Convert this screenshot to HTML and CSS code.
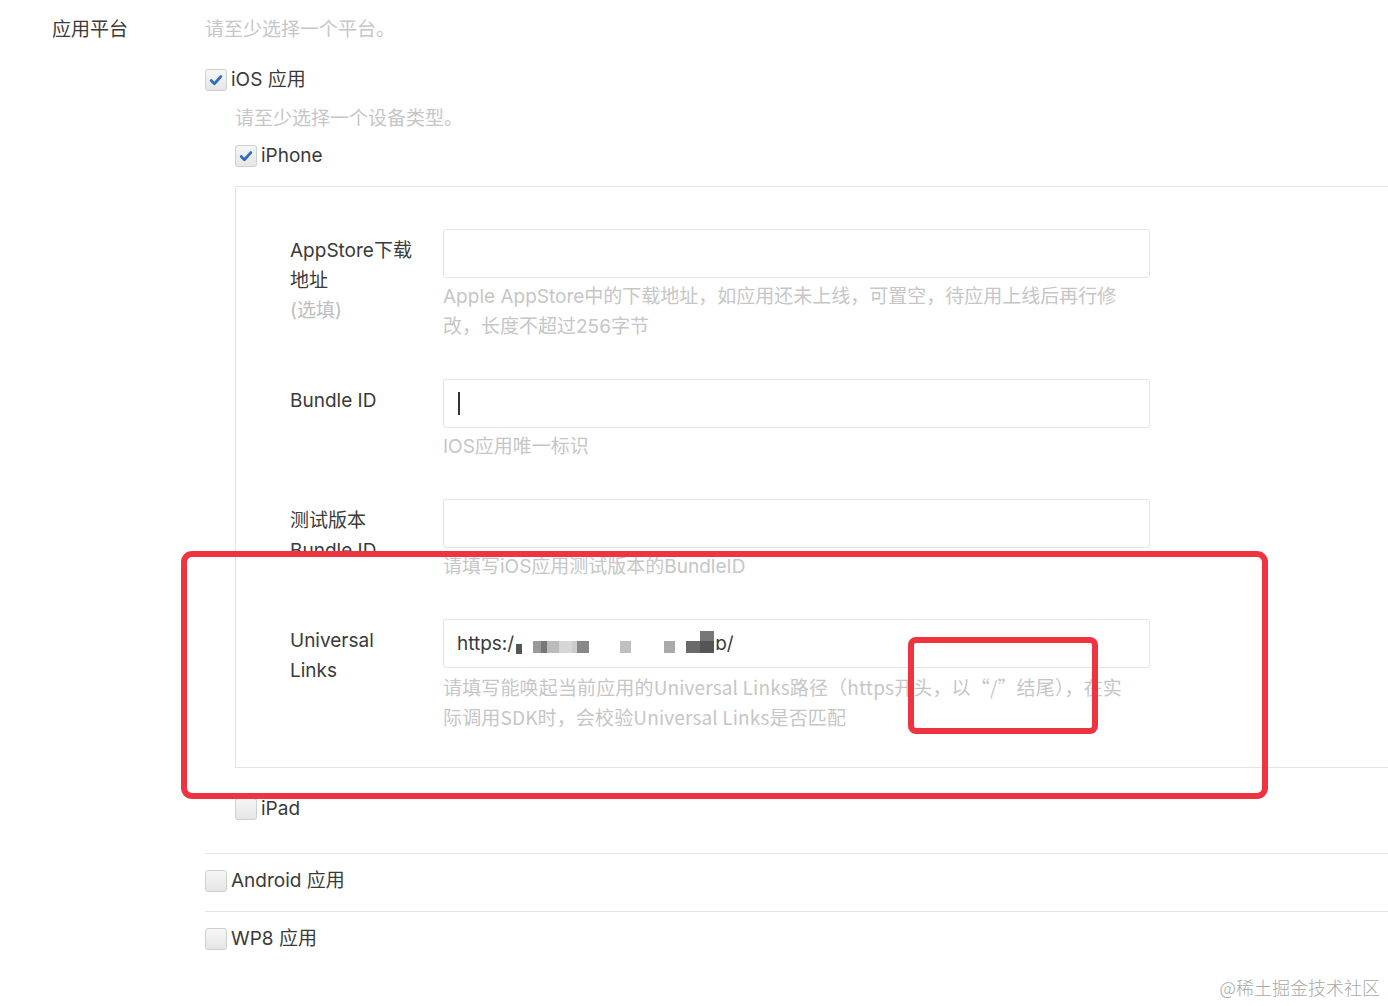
FILE: index.html
```html
<!DOCTYPE html>
<html lang="zh-CN">

<head>
    <meta charset="UTF-8">
    <meta name="viewport" content="width=device-width, initial-scale=1.0">
    <title>应用平台</title>
    <link rel="stylesheet" href="styles.css">
</head>

<body>

    <main class="page">

        <section class="field">

            <div class="field-label">应用平台</div>

            <div class="field-body">

                <p class="tip">请至少选择一个平台。</p>

                <label class="check check-ios">
                    <span class="box is-checked">
                        <svg viewBox="0 0 22 22" width="22" height="22"><path d="M6.2 11.6 L9.4 14.8 L15.8 7.6" /></svg>
                    </span>
                    iOS 应用
                </label>

                <div class="device">

                    <p class="tip tip-device">请至少选择一个设备类型。</p>

                    <label class="check check-iphone">
                        <span class="box is-checked">
                            <svg viewBox="0 0 22 22" width="22" height="22"><path d="M6.2 11.6 L9.4 14.8 L15.8 7.6" /></svg>
                        </span>
                        iPhone
                    </label>

                    <article class="panel">

                        <div class="row">
                            <div class="row-label">AppStore下载地址<span class="optional">(选填)</span></div>
                            <div class="row-field">
                                <div class="input"></div>
                                <p class="hint">Apple AppStore中的下载地址，如应用还未上线，可置空，待应用上线后再行修改，长度不超过256字节</p>
                            </div>
                        </div>

                        <div class="row">
                            <div class="row-label">Bundle ID</div>
                            <div class="row-field">
                                <div class="input"><span class="caret"></span></div>
                                <p class="hint">IOS应用唯一标识</p>
                            </div>
                        </div>

                        <div class="row">
                            <div class="row-label">测试版本Bundle ID</div>
                            <div class="row-field">
                                <div class="input"></div>
                                <p class="hint">请填写iOS应用测试版本的BundleID</p>
                            </div>
                        </div>

                        <div class="row">
                            <div class="row-label">Universal Links</div>
                            <div class="row-field">
                                <div class="input">https:/<span class="px px-a"></span><span class="px px-b"></span><span class="px px-c"></span><span class="px px-d"></span><span class="px px-e"></span><span class="px px-f"></span><span class="px px-g"></span><span class="px px-h"></span>ɒ/</div>
                                <p class="hint hint-cjk">请填写能唤起当前应用的Universal Links路径（https开头，以“/”结尾），在实际调用SDK时，会校验Universal Links是否匹配</p>
                            </div>
                        </div>

                    </article>

                    <label class="check check-ipad">
                        <span class="box"></span>
                        iPad
                    </label>

                </div>

                <div class="platform platform-android">
                    <label class="check">
                        <span class="box"></span>
                        Android 应用
                    </label>
                </div>

                <div class="platform">
                    <label class="check">
                        <span class="box"></span>
                        WP8 应用
                    </label>
                </div>

            </div>

        </section>

    </main>

    <!-- annotation marks -->
    <div class="mark mark-big"></div>
    <div class="mark mark-small"></div>

    <div class="watermark">@稀土掘金技术社区</div>

</body>

</html>
```

FILE: styles.css
```css
/*      Variables       */
:root {
    --text-color: #3a3a3a;
    --tip-color: #c6c6c6;
    --line-color: #e4e4e4;
    --mark-color: #ef3341;
}

/*      Reset Styles    */
html {
    padding: 0;
    margin: 0;
    box-sizing: border-box;
    font-family: "Inter", "Noto Sans CJK SC", sans-serif;
}

body {
    padding: 0;
    margin: 0;
    overflow: hidden;
    height: 1006px;
    position: relative;
    background-color: #fff;
    color: var(--text-color);
    font-size: 19px;
}

*,
*::before,
*::after {
    box-sizing: inherit;
}

.page {
    padding: 15px 0 0 52px;
}

.field {
    display: flex;
}

.field-label {
    width: 153px;
    flex-shrink: 0;
    line-height: 30px;
}

.field-body {
    width: 1260px;
    flex-shrink: 0;
}

.tip {
    margin: 0;
    line-height: 30px;
    color: var(--tip-color);
}

/*      Checkboxes      */
.check {
    display: flex;
    align-items: center;
    gap: 4px;
    height: 22px;
    line-height: 22px;
}

.box {
    width: 22px;
    height: 22px;
    flex-shrink: 0;
    border: 1px solid #cfcfcf;
    border-radius: 3px;
    background: linear-gradient(#f6f6f6, #e6e6e6);
    display: grid;
    place-content: center;
}

.box svg {
    display: block;
    margin: -1px;

    & path {
        fill: none;
        stroke: #2d6fbb;
        stroke-width: 2.8;
        stroke-linecap: round;
        stroke-linejoin: round;
    }
}

.check-ios {
    margin-top: 24px;
}

.device {
    padding-left: 30px;
}

.tip-device {
    margin-top: 13px;
}

.check-iphone {
    margin-top: 11px;
}

.check-ipad {
    margin-top: 30px;
}

/*      Panel           */
.panel {
    margin-top: 19px;
    border: 1px solid var(--line-color);
    border-right: none;
    padding: 42px 0 35px 54px;
}

.row {
    display: flex;
}

.row + .row {
    margin-top: 37px;
}

.row-label {
    width: 132px;
    margin-right: 21px;
    padding-top: 7px;
    line-height: 30px;
    flex-shrink: 0;
}

.optional {
    display: block;
    color: #bdbdbd;
}

.row-field {
    width: 707px;
}

.input {
    height: 49px;
    border: 1px solid var(--line-color);
    border-radius: 3px;
    padding-left: 13px;
    display: flex;
    align-items: center;
    white-space: nowrap;
}

.caret {
    width: 2px;
    height: 23px;
    margin-left: 1px;
    background-color: #333;
}

.hint {
    margin: 4px 0 0;
    max-width: 700px;
    line-height: 30px;
    color: var(--tip-color);
}

/* full width quotes come from the CJK font */
.hint-cjk {
    max-width: 690px;
    font-family: "Noto Sans CJK SC", sans-serif;
    letter-spacing: .15px;
}

/*      Mosaic in url   */
.px {
    display: inline-block;
    height: 12px;
    align-self: center;
    margin-top: 6px;
}

.px-a { width: 6px; margin-left: 2px; height: 10px; margin-top: 10px; background: #555; }
.px-b { width: 26px; margin-left: 11px; background: linear-gradient(90deg, #999 0 30%, #777 30% 55%, #bbb 55% 100%); }
.px-c { width: 13px; background: #d6d6d6; }
.px-d { width: 17px; background: linear-gradient(90deg, #ccc 0 30%, #888 30% 100%); }
.px-e { width: 11px; margin-left: 31px; background: #c0c0c0; }
.px-f { width: 11px; margin-left: 33px; background: #aaa; }
.px-g { width: 14px; margin-left: 11px; background: #6a6a6a; }
.px-h { width: 14px; height: 22px; margin-top: -4px; margin-right: 1px; background: linear-gradient(#777 0 45%, #555 45% 100%); }

/*      Platforms       */
.platform {
    margin-top: 19px;
    padding-top: 16px;
    border-top: 1px solid var(--line-color);
}

.platform-android {
    margin-top: 33px;
}

/*      Annotations     */
.mark {
    position: absolute;
    border: 6px solid var(--mark-color);
}

.mark-big {
    left: 181px;
    top: 551px;
    width: 1087px;
    height: 248px;
    border-radius: 11px;
}

.mark-small {
    left: 908px;
    top: 637px;
    width: 190px;
    height: 97px;
    border-radius: 8px;
}

.watermark {
    position: absolute;
    right: 8px;
    bottom: 6px;
    font-size: 18px;
    color: #a8a8a8;
    font-family: "Noto Sans CJK SC", sans-serif;
    font-weight: 300;
}
```
